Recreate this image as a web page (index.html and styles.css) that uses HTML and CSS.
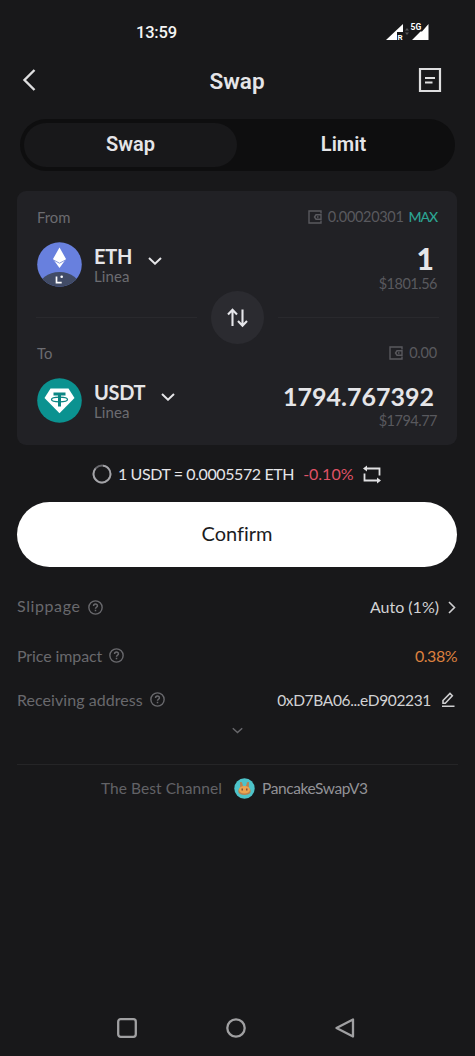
FILE: index.html
```html
<!DOCTYPE html>
<html lang="en">
<head>
<meta charset="utf-8">
<title>Swap</title>
<link rel="stylesheet" href="styles.css">
</head>
<body>
<svg class="defs" width="0" height="0">
  <symbol id="wallet" viewBox="0 0 14 14"><path d="M13 3.500V1H1v12h12v-2.500M13 4.800H8L6.500 7 8 9.200h5zM9 7h1.500" fill="none" stroke="currentColor" stroke-width="1.400"/></symbol>
  <symbol id="help" viewBox="0 0 14 14"><circle cx="7" cy="7" r="6.200" fill="none" stroke="currentColor" stroke-width="1.300"/><path d="M5.200 5.700C5.200 3.200 8.900 3.300 8.800 5.500 8.700 6.800 7 6.800 7 8.100M7 9.200v1.400" fill="none" stroke="currentColor" stroke-width="1.400"/></symbol>
  <symbol id="down" viewBox="0 0 14 8"><path d="M1 1l6 5.700L13 1" fill="none" stroke="currentColor" stroke-width="2"/></symbol>
</svg>
<div class="screen">
  <div class="status">
    <span class="clock">13:59</span>
    <svg class="signal" width="44" height="18" viewBox="0 0 44 18">
      <path d="M0 17L17 1v8h-6v8z" fill="#fff"/>
      <text x="11.500" y="17" class="sig-r">R</text>
      <path d="M19 7.500l2-2.500 2 2.500zM19 9.500l2 2.500 2-2.500z" fill="#555558"/>
      <path d="M26 17L34.500 8.500H36L42.500 1V17z" fill="#fff"/>
      <text x="24.500" y="7.200" class="sig-5g">5G</text>
    </svg>
  </div>
  <header class="header">
    <svg width="14" height="24" viewBox="0 0 14 24"><path d="M12.500 2L2.500 12l10 10" fill="none" stroke="#dededf" stroke-width="2.400"/></svg>
    <h1 class="title">Swap</h1>
    <svg width="24" height="26" viewBox="0 0 24 26"><path d="M2 2h20v22H2zM7 11h10M7 15.500h7.500" fill="none" stroke="#dededf" stroke-width="2.200"/></svg>
  </header>
  <div class="tabs"><div class="tab active"><span>Swap</span></div><div class="tab"><span>Limit</span></div></div>

  <section class="card">
    <div class="row label-row"><span class="from">From</span><span class="balance"><svg width="14" height="14"><use href="#wallet"/></svg><span class="bal-num">0.00020301</span><span class="max">MAX</span></span></div>
    <div class="row token-row">
      <svg class="coin" width="45" height="45" viewBox="0 0 45 45">
        <clipPath id="c"><circle cx="22.500" cy="22.500" r="22.300"/></clipPath>
        <g clip-path="url(#c)"><rect width="45" height="45" fill="#6880de"/><ellipse cx="22.500" cy="46" rx="21" ry="16" fill="#414b66"/></g>
        <path d="M22.500 5.500L29 17l-6.500 9L16 17z" fill="#fff"/><path d="M16.500 18l6 3.200 6-3.200" fill="none" stroke="#8999db" stroke-width="1"/>
        <path d="M19.500 34.500v6.200h5.200" fill="none" stroke="#fff" stroke-width="1.700"/><circle cx="24.700" cy="34.800" r="1.300" fill="#fff"/>
      </svg>
      <div class="names"><div class="symbol"><span class="eth">ETH</span><svg class="chev eth-chev" width="14" height="8"><use href="#down"/></svg></div><span class="chain">Linea</span></div>
      <div class="amounts"><span class="amount big">1</span><span class="fiat">$1801.56</span></div>
    </div>
    <div class="divider"><i></i>
      <svg width="53" height="53" viewBox="0 0 53 53"><circle cx="26.500" cy="26.500" r="26.500" fill="#2b2b30"/><path d="M21.500 35V19M17 23.500l4.500-4.700L26 23.500M31.500 18.500v15.500M27 30l4.500 4.700L36 30" fill="none" stroke="#e6e6ea" stroke-width="2.100"/></svg>
    <i></i></div>
    <div class="row label-row to-row"><span class="to">To</span><span class="balance"><svg width="14" height="14"><use href="#wallet"/></svg><span class="zero">0.00</span></span></div>
    <div class="row token-row">
      <svg class="coin" width="45" height="45" viewBox="0 0 45 45">
        <circle cx="22.500" cy="22.500" r="22.300" fill="#0b9290"/>
        <path d="M13.500 10.500h18l6 9.500-15 15.300L7.500 20z" fill="#fff"/>
        <path d="M16.500 16h12M22.500 16v12.500" fill="none" stroke="#0b8583" stroke-width="3"/><ellipse cx="22.500" cy="21.500" rx="8" ry="2.300" fill="none" stroke="#0b8583" stroke-width="1.300"/>
      </svg>
      <div class="names"><div class="symbol"><span class="usdt">USDT</span><svg class="chev usdt-chev" width="14" height="8"><use href="#down"/></svg></div><span class="chain">Linea</span></div>
      <div class="amounts"><span class="amount">1794.767392</span><span class="fiat">$1794.77</span></div>
    </div>
  </section>

  <div class="rate">
    <svg width="20" height="20" viewBox="0 0 20 20"><circle cx="10" cy="10" r="8.500" fill="none" stroke="#66666b" stroke-width="2"/><path d="M11 1.550A8.500 8.500 0 1 1 3.500 4.500" fill="none" stroke="#a4a4a8" stroke-width="1.700"/></svg>
    <span class="rate-text">1 USDT = 0.0005572 ETH</span><span class="change">-0.10%</span>
    <svg width="18" height="19" viewBox="0 0 18 19"><path d="M3 3.500h13.500V10.500M15 15.500H1.500V8.500" fill="none" stroke="#e0e0e2" stroke-width="1.800"/><path d="M0 3.500L4 .5v6zM18 15.500L14 12.500v6z" fill="#e0e0e2"/></svg>
  </div>
  <button class="confirm"><span>Confirm</span></button>

  <div class="details">
    <div class="detail slip"><span class="name n1">Slippage</span><svg class="help" width="15" height="15"><use href="#help"/></svg><span class="value v1">Auto (1%)</span><svg class="next" width="8" height="13" viewBox="0 0 8 13"><path d="M1 1l5.500 5.500L1 12" fill="none" stroke="#cfcfd1" stroke-width="1.600"/></svg></div>
    <div class="detail impact"><span class="name n2">Price impact</span><svg class="help" width="15" height="15"><use href="#help"/></svg><span class="value v2">0.38%</span></div>
    <div class="detail address"><span class="name n3">Receiving address</span><svg class="help" width="15" height="15"><use href="#help"/></svg><span class="value v3">0xD7BA06...eD902231</span><svg class="edit" width="14" height="16" viewBox="0 0 14 16"><path d="M1 14.200h12.500M2 11.200V8.500L9 1.500l2.300 2.300-7 7.400z" fill="none" stroke="#cfcfd1" stroke-width="1.600"/></svg></div>
  </div>
  <svg class="more" width="11" height="7" viewBox="0 0 14 8"><path d="M1 1l6 5.700L13 1" fill="none" stroke="#68686c" stroke-width="1.800"/></svg>
  <div class="channel">
    <span class="best">The Best Channel</span>
    <svg width="21" height="21" viewBox="0 0 21 21"><circle cx="10.500" cy="10.500" r="10.200" fill="#4dc3c9"/><path d="M6 4l2 .2 1 3.800h3l1-3.800 2-.2-.2 5.500c3.500 3 2.300 7.500-4.300 7.500s-7.800-4.500-4.300-7.500z" fill="#b98250"/><ellipse cx="10.500" cy="11.700" rx="5.500" ry="3.800" fill="#eba451"/><path d="M8.200 10.500v2M12.800 10.500v2" stroke="#704334" stroke-width="1.300"/></svg>
    <span class="pancake">PancakeSwapV3</span>
  </div>
  <nav class="nav">
    <svg width="20" height="20" viewBox="0 0 20 20"><rect x="1.200" y="1.200" width="17.600" height="17.600" rx="2.500"/></svg>
    <svg width="20" height="20" viewBox="0 0 20 20"><circle cx="10" cy="10" r="8.700"/></svg>
    <svg width="20" height="20" viewBox="0 0 20 20"><path d="M18 1.500v17L1.500 10z"/></svg>
  </nav>
</div>
</body>
</html>
```
FILE: styles.css
```css
* { box-sizing: border-box; }
body { margin: 0; background: #18181a; color: #e5e5e8; font-family: Lato, "Noto Sans", sans-serif; font-variant-ligatures: none; }
svg { display: block; flex: none; }
.defs { position: absolute; }
.screen { height: 1056px; display: flex; flex-direction: column; white-space: nowrap; overflow: hidden; }
.screen > * { flex: none; }
.status { height: 62px; padding: 2px 45px 0 136px; display: flex; align-items: center; justify-content: space-between; }
.clock { font: 500 16.500px/20px Roboto, sans-serif; letter-spacing: -0.2px; color: #f4f4f4; padding-top: 2px; }
.signal { font-family: Roboto, sans-serif; fill: #fff; font-weight: 700; }
.sig-r { font-size: 8px; }
.sig-5g { font-size: 8.500px; }
.header { height: 36px; padding: 0 33px 0 22px; display: flex; align-items: center; justify-content: space-between; }
.title { margin: 2px 0 0 20px; font: 600 22.500px/26px Roboto, sans-serif; }
.tabs { height: 52px; margin: 21px 20px 0; padding: 4px; border-radius: 26px; background: #0e0e0f; display: flex; }
.tab { width: 213px; height: 44px; padding-bottom: 2px; border-radius: 22px; display: flex; align-items: center; justify-content: center; font: 600 20px/24px Roboto, sans-serif; }
.tab.active { background: #18181a; }
.card { margin: 20px 18px 0 17px; height: 254px; padding: 16px 20px 0; border-radius: 9px; background: #212125; }
.row { display: flex; justify-content: space-between; }
.label-row { height: 20px; align-items: center; font-size: 14.800px; color: #6c6c71; }
.label-row span { line-height: 18px; }
.balance { display: flex; align-items: center; color: #59595e; }
.balance svg { margin-right: 6px; }
.bal-num { font-size: 14.500px; letter-spacing: -0.32px; }
.zero { font-size: 14.500px; letter-spacing: -0.2px; }
.max { color: #2ca493; margin-left: 5px; font-size: 14px; font-weight: 500; letter-spacing: -1.1px; }
.token-row { height: 61px; padding-top: 15px; }
.names { margin-left: 12px; flex: 1; }
.symbol { height: 28px; display: flex; align-items: center; font-size: 20px; font-weight: 700; letter-spacing: -0.3px; }
.chev { margin: 10px 0 0 16px; }
.chain { display: block; height: 14px; line-height: 12px; font-size: 15px; letter-spacing: 0.1px; color: #6c6c71; }
.amounts { display: flex; flex-direction: column; align-items: flex-end; }
.amount { font-size: 25px; font-weight: 700; line-height: 36px; height: 34px; padding-right: 3px; }
.amount.big { font-size: 30px; font-weight: 900; line-height: 33px; }
.fiat { font-size: 14.500px; letter-spacing: -0.5px; line-height: 17px; color: #59595e; }
.divider { height: 53px; margin: 3px -2px 0 -1px; display: flex; align-items: center; justify-content: space-between; }
.divider i { width: 161px; height: 1px; background: #29292d; }
.to-row { margin-top: -1px; }
.rate { height: 20px; margin: 19px 0 0 92px; display: flex; align-items: center; font-size: 16px; line-height: 20px; }
.rate span { padding-bottom: 1px; }
.rate-text { margin-left: 6px; letter-spacing: -0.4px; }
.change { margin: 0 9px; color: #df5266; }
.confirm { margin: 18px 18px 0 17px; height: 65px; padding: 0 0 3px; border: 0; border-radius: 33px; background: #fff; color: #1c1c1e; font: 400 20px/24px Lato, sans-serif; font-variant-ligatures: none; }
.details { padding: 30px 18px 0 17px; font-size: 16px; line-height: 18px; }
.detail { height: 20px; display: flex; align-items: center; }
.detail span { padding-bottom: 1px; }
.slip .name { padding-bottom: 2px; }
.impact { margin-top: 29px; }
.address { margin-top: 24px; }
.name { color: #69696d; }
.n1 { letter-spacing: 0.6px; }
.n2 { letter-spacing: -0.1px; }
.n3 { letter-spacing: 0.05px; }
.help { color: #69696d; margin-left: 7px; }
.impact .help, .address .help { margin-bottom: 1px; }
.value { margin-left: auto; color: #d2d2d4; }
.next { margin: 0 1px 0 9px; }
.edit { margin: 0 2px 0 10px; }
.v2 { color: #dc803f; letter-spacing: -0.5px; }
.v3 { font-size: 15.500px; letter-spacing: -0.35px; }
.more { margin: 17px 0 0 232px; }
.channel { margin: 30px 17px 0; border-top: 1px solid #252527; height: 48px; padding-left: 84px; display: flex; align-items: center; font-size: 15.500px; line-height: 18px; }
.channel span { padding-bottom: 2px; }
.best { color: #626266; letter-spacing: 0.06px; }
.channel svg { margin: 0 7px 0 12px; }
.pancake { color: #929297; letter-spacing: -0.4px; }
.nav { margin-top: 206px; padding: 0 120px 0 117px; display: flex; justify-content: space-between; fill: none; stroke: #a0a0a2; stroke-width: 2.300; stroke-linejoin: round; }
```
